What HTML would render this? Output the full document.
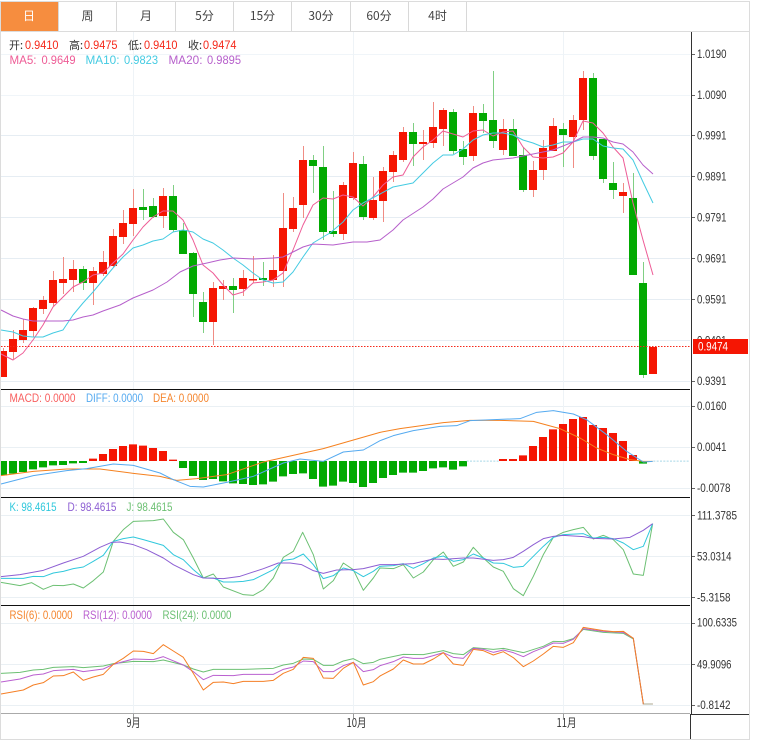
<!DOCTYPE html>
<html><head><meta charset="utf-8"><style>
html,body{margin:0;padding:0;background:#fff;width:758px;height:743px;overflow:hidden}
svg{display:block}
text{font-family:"Liberation Sans","Noto Sans CJK SC",sans-serif;font-size:12px}
.a{font-size:12px;fill:#333}
.t{font-size:12px;fill:#444;text-anchor:middle;font-family:"Noto Sans CJK SC","Liberation Sans",sans-serif}
.c{font-family:"Noto Sans CJK SC","Liberation Sans",sans-serif;fill:#333}
.r{fill:#f5281a}
polyline{fill:none;stroke-linejoin:round}
</style></head><body>
<svg width="758" height="743" viewBox="0 0 758 743" xmlns="http://www.w3.org/2000/svg">
<rect x="1" y="2" width="57" height="29" fill="#f68d3f"/>
<path d="M58.5 2V31M116.5 2V31M175.5 2V31M233.5 2V31M291.5 2V31M350.5 2V31M408.5 2V31M466.5 2V31" stroke="#d8d8d8"/>
<text class="t" x="29" y="20" style="fill:#fff">日</text>
<text class="t" x="87.500" y="20">周</text>
<text class="t" x="146" y="20">月</text>
<text class="t" x="204.500" y="20">5分</text>
<text class="t" x="262.500" y="20">15分</text>
<text class="t" x="321" y="20">30分</text>
<text class="t" x="379" y="20">60分</text>
<text class="t" x="437.500" y="20">4时</text>

<!-- grids -->
<path d="M1 54.500H690M1 95.500H690" stroke="#f0f5f9"/>
<path d="M1 135.500H690M1 176.500H690M1 217.500H690M1 258.500H690M1 299.500H690M1 340.500H690M1 381.500H690" stroke="#e6edf3"/>
<path d="M1 406.500H690M1 447.500H690M1 488.500H690M1 515.500H690M1 556.500H690M1 597.500H690M1 623.500H690M1 664.500H690M1 705.500H690" stroke="#eaf0f4"/>
<path d="M133.500 32V714M353.500 32V714M563.500 32V714" stroke="#eef3f7"/>

<!-- candles -->
<path fill="none" stroke="#f08c84" d="M3.500 348V351M13.500 330V359M23.500 319V343M33.500 307V337M43.500 296V314M53.500 271V306M63.500 257V294M73.500 260V292M93.500 267V305M103.500 251V276M113.500 229V268M123.500 210V244M133.500 189V236M163.500 188V228M213.500 282V345M223.500 280V300M243.500 270V296M253.500 256V283M273.500 255V287M283.500 193V287M293.500 197V232M303.500 146V218M343.500 182V240M353.500 152V200M373.500 177V220M383.500 167V222M393.500 151V182M403.500 127V162M423.500 130V160M433.500 102V148M443.500 108V146M473.500 106V161M503.500 119V155M533.500 161V197M543.500 140V180M553.500 118V151M573.500 115V168M583.500 71V130M623.500 183V213"/>
<path fill="none" stroke="#80cf84" d="M83.500 266V290M143.500 189V220M153.500 198V218M173.500 185V232M183.500 223V254M193.500 252V317M203.500 292V333M233.500 278V313M263.500 262V286M313.500 155V193M323.500 146V240M333.500 191V237M363.500 156V220M413.500 123V166M453.500 109V154M463.500 141V165M483.500 104V133M493.500 71V148M513.500 119V156M523.500 147V192M563.500 123V167M593.500 73V160M603.500 139V183M613.500 162V199M633.500 173V275M643.500 262V378"/>
<path fill="none" stroke="#f51603" stroke-width="8" d="M3 351V377M13 339V352M23 330V340M33 308V331M43 300V309M53 280V303M63 279V283M73 269V280M93 271V283M103 262V274M113 236V266M123 223V237M133 208V224M163 196V216M213 288V322M223 286V289M243 278V289M253 279V280.500M273 270V280M283 228V271M293 208V229M303 160V205M343 185V234M353 163V198M373 200V218M383 171V201M393 155V172M403 132V160M423 142V144M433 127V143M443 110V129M473 113V156M503 129V150M533 170V190M543 148V170M553 126V151M573 120V137M583 78V120M623 192V196M653 347V374"/>
<path fill="none" stroke="#02aa02" stroke-width="8" d="M83 269V283M143 207V210M153 206V217M173 196V230M183 230V254M193 253V294M203 302V322M233 286V290M263 278V280M313 160V166M323 167V232M333 231V234M363 164V217M413 132V144M453 112V151M463 149V157M483 113V121M493 120V141M513 129V156M523 155V190M563 129V135M593 78V156M603 139V179M613 183V190M633 198V275M643 283V375"/>

<!-- MA lines -->
<polyline stroke="#ee5c96" points="1,354 13,360 23,353 33,340 43,325 53,307 63,297 73,287 83,282 93,275 103,273 113,263 123,254 133,240 143,227 153,217 163,211 173,211 183,220 193,240 203,265 213,273 223,285 233,295 243,292 253,283 263,282 273,280 283,273 293,250 303,225 313,205 323,198 333,199 343,195 353,197 363,206 373,197 383,185 393,177 403,175 413,157 423,147 433,140 443,131 453,134 463,137 473,131 483,130 493,136 503,132 513,131 523,147 533,157 543,158 553,157 563,153 573,142 583,121 593,123 603,133 613,147 623,158 633,203 643,240 653,275"/>
<polyline stroke="#44cbe2" points="1,330 13,332 23,336 33,337 43,337 53,333 63,330 73,315 83,303 93,292 103,280 113,268 123,257 133,248 143,245 153,241 163,239 173,232 183,230 193,232 203,239 213,243 223,250 233,258 243,265 253,273 263,280 273,283 283,282 293,272 303,257 313,243 323,237 330,233 343,222 353,210 363,203 380,194 393,187 403,185 413,183 423,173 433,163 443,155 453,155 463,149 473,140 483,135 493,133 503,133 513,135 523,140 533,143 543,147 553,145 563,142 573,142 583,139 593,139 603,146 613,148 623,149 633,160 643,182 653,203"/>
<polyline stroke="#b65fcb" points="1,310 13,316 23,319 33,321 43,321 53,321 63,321 73,320 83,317 93,315 103,311 120,305 133,298 153,290 167,282 180,272 193,266 207,263 220,260 233,258 253,259 273,258 283,257 293,252 303,247 313,244 333,245 353,242 367,242 380,240 393,230 403,220 423,207 433,199 443,189 463,177 473,168 483,163 493,160 513,158 533,154 553,150 563,146 573,142 583,137 593,137 603,138 613,142 623,144 633,152 643,165 653,174"/>

<path d="M1 346.500H690" stroke="#f5281a" stroke-dasharray="1.500 1.500"/>

<!-- MACD -->
<g transform="translate(0,388) scale(.33333)">
<path fill="none" stroke="#02aa02" stroke-width="24" d="M9 219V262M39 219V257M69 219V252M99 219V244M129 219V238M159 219V232M189 219V231M219 219V226M249 219V225M549 219V240M579 219V264M609 219V276M639 219V273M669 219V280M699 219V286M729 219V288M759 219V291M789 219V289M819 219V281M849 219V265M879 219V258M909 219V256M939 219V273M969 219V296M999 219V293M1029 219V281M1059 219V285M1089 219V297M1119 219V285M1149 219V270M1179 219V261M1209 219V254M1239 219V254M1269 219V249M1299 219V241M1329 219V238M1359 219V245M1389 219V235M1929 219V227"/>
<path fill="none" stroke="#f51603" stroke-width="24" d="M279 219V212M309 219V198M339 219V183M369 219V174M399 219V169M429 219V173M459 219V180M489 219V189M519 219V215M1509 219V213M1539 219V213M1569 219V202M1599 219V174M1629 219V147M1659 219V124M1689 219V108M1719 219V93M1749 219V87M1779 219V111M1809 219V120M1839 219V135M1869 219V159M1899 219V201"/>
<path fill="none" stroke="#a8d8e8" stroke-width="3" stroke-dasharray="6 4" d="M1400 219.500H1500M1960 219.500H2070"/>
<polyline stroke="#f5811f" stroke-width="3" points="3,263 100,250 200,243 300,243 400,256 480,265 530,277 590,272 680,260 790,222 970,182 1140,133 1200,122 1270,112 1330,104 1410,97 1500,97 1600,100 1680,122 1740,150 1790,180 1840,200 1890,215 1930,220 1958,220"/>
<polyline stroke="#55aaf0" stroke-width="3" points="3,288 100,263 200,248 260,242 340,228 400,232 480,255 520,275 570,295 610,297 680,283 760,265 850,225 900,213 970,220 1030,192 1090,186 1140,158 1180,143 1240,128 1320,115 1370,113 1410,98 1500,94 1560,92 1610,73 1660,68 1720,78 1760,95 1820,140 1880,190 1930,222 1958,220"/>
</g>

<!-- KDJ -->
<g transform="translate(0,498) scale(.33333)" stroke-width="3">
<polyline stroke="#6cc073" points="3,253 60,263 95,254 130,274 160,262 190,263 220,258 250,270 280,248 310,222 340,130 370,95 400,70 460,68 490,63 520,103 550,125 580,180 610,240 640,228 670,267 730,290 760,292 790,275 820,240 850,178 880,160 908,103 940,170 970,273 1000,248 1030,195 1060,215 1090,277 1120,240 1140,210 1180,212 1210,200 1240,240 1270,222 1300,185 1330,162 1360,205 1390,192 1420,148 1450,180 1480,207 1510,220 1540,272 1570,293 1600,235 1630,170 1660,118 1690,103 1720,95 1750,88 1780,123 1810,112 1840,125 1870,155 1900,228 1930,232 1958,77"/>
<polyline stroke="#30c8dc" points="3,241 70,241 100,235 130,236 160,225 190,220 220,212 250,207 280,190 310,172 340,130 370,122 400,117 430,125 490,142 520,170 550,185 580,215 610,240 640,240 670,252 700,252 730,250 760,245 790,230 820,215 850,187 880,183 910,168 940,200 970,242 1000,233 1030,210 1060,218 1090,236 1120,220 1140,205 1180,203 1210,197 1240,211 1270,197 1300,180 1330,174 1360,190 1390,185 1420,168 1450,180 1480,195 1510,196 1540,208 1570,205 1600,175 1630,145 1660,118 1690,110 1750,107 1780,120 1810,118 1840,122 1870,135 1900,155 1930,145 1958,77"/>
<polyline stroke="#8d5fd3" points="3,236 60,230 130,217 190,195 250,175 300,148 335,133 360,132 400,140 440,155 490,180 520,200 550,215 580,230 610,240 670,242 720,235 790,212 835,195 870,195 905,200 940,218 970,226 1010,216 1060,215 1090,212 1140,200 1180,200 1240,197 1300,183 1330,184 1390,180 1420,180 1480,187 1510,185 1540,178 1570,160 1600,140 1630,122 1660,115 1690,112 1750,116 1780,121 1840,123 1890,118 1930,97 1958,77"/>
</g>

<!-- RSI -->
<g transform="translate(0,605) scale(.33333)" stroke-width="3">
<polyline stroke="#6cc073" points="3,205 60,202 100,195 130,193 160,187 220,185 250,188 310,183 340,176 400,169 460,170 490,165 550,180 580,192 610,201 640,193 730,193 820,190 850,180 880,175 910,162 940,163 970,181 1000,181 1030,168 1060,161 1090,176 1120,172 1140,163 1210,148 1270,149 1330,137 1360,146 1390,149 1420,128 1480,133 1510,130 1570,143 1630,124 1660,109 1690,110 1720,101 1750,73 1810,82 1870,85 1900,102 1930,297 1958,297"/>
<polyline stroke="#ba60d0" points="3,231 60,222 100,210 130,207 160,197 220,193 250,200 310,192 340,178 370,170 400,162 460,164 490,155 550,180 580,200 610,224 640,211 700,212 730,208 820,208 850,193 880,186 910,168 940,170 970,200 1000,200 1030,182 1060,172 1090,200 1120,194 1140,182 1180,170 1210,156 1240,160 1270,160 1300,152 1330,143 1360,157 1390,160 1420,130 1450,133 1480,142 1510,135 1540,143 1570,155 1600,140 1630,128 1660,114 1690,115 1720,103 1750,71 1810,79 1870,82 1900,100 1930,297 1958,297"/>
<polyline stroke="#f57f25" points="3,267 70,255 100,240 130,233 160,213 190,212 220,201 250,226 280,216 310,208 340,178 370,160 400,138 430,139 460,146 490,119 520,138 550,157 580,205 610,255 640,232 670,231 700,236 730,229 790,229 820,226 850,205 880,193 910,157 940,160 970,219 1000,220 1030,190 1060,172 1090,240 1120,230 1140,213 1180,192 1210,165 1240,177 1270,177 1300,162 1330,143 1360,177 1390,181 1420,133 1450,137 1480,150 1510,140 1540,158 1570,185 1600,168 1630,147 1660,124 1690,127 1720,113 1750,67 1780,72 1810,77 1840,80 1870,79 1900,100 1930,297 1958,297"/>
<path d="M1930 297H1958" stroke="#a8a890" stroke-width="3"/>
</g>

<!-- separators / axes -->
<path d="M1 389.500H690M1 497.500H690M1 605.500H690" stroke="#111"/>
<path d="M1 713.500H690" stroke="#aaa"/>
<path d="M691.500 32V714" stroke="#333"/>
<path d="M691 714.500H749M690.500 714V739" stroke="#333"/>
<path d="M133.500 714V718M353.500 714V718M563.500 714V718" stroke="#999"/>
<path d="M692 54.500h3M692 95.500h3M692 135.500h3M692 176.500h3M692 217.500h3M692 258.500h3M692 299.500h3M692 381.500h3M692 406.500h3M692 447.500h3M692 488.500h3M692 515.500h3M692 556.500h3M692 597.500h3M692 623.500h3M692 664.500h3M692 705.500h3" stroke="#666"/>

<g class="axis">
<text class="a" x="697" y="58" textLength="29.500" lengthAdjust="spacingAndGlyphs">1.0190</text>
<text class="a" x="697" y="99" textLength="29.500" lengthAdjust="spacingAndGlyphs">1.0090</text>
<text class="a" x="697" y="139.500" textLength="29.500" lengthAdjust="spacingAndGlyphs">0.9991</text>
<text class="a" x="697" y="180.500" textLength="29.500" lengthAdjust="spacingAndGlyphs">0.9891</text>
<text class="a" x="697" y="221.500" textLength="29.500" lengthAdjust="spacingAndGlyphs">0.9791</text>
<text class="a" x="697" y="262.500" textLength="29.500" lengthAdjust="spacingAndGlyphs">0.9691</text>
<text class="a" x="697" y="303.500" textLength="29.500" lengthAdjust="spacingAndGlyphs">0.9591</text>
<text class="a" x="697" y="344.500" textLength="29.500" lengthAdjust="spacingAndGlyphs">0.9491</text>
<text class="a" x="697" y="385" textLength="29.500" lengthAdjust="spacingAndGlyphs">0.9391</text>
<rect x="693" y="339" width="55" height="15" fill="#f51603"/>
<text class="a" x="698" y="350.500" textLength="30" lengthAdjust="spacingAndGlyphs" style="fill:#fff">0.9474</text>
<text class="a" x="697" y="410" textLength="29.500" lengthAdjust="spacingAndGlyphs">0.0160</text>
<text class="a" x="697" y="451" textLength="29.500" lengthAdjust="spacingAndGlyphs">0.0041</text>
<text class="a" x="697" y="492" textLength="33.500" lengthAdjust="spacingAndGlyphs">-0.0078</text>
<text class="a" x="697" y="519.500" textLength="40" lengthAdjust="spacingAndGlyphs">111.3785</text>
<text class="a" x="697" y="560.500" textLength="34.500" lengthAdjust="spacingAndGlyphs">53.0314</text>
<text class="a" x="697" y="601.500" textLength="33.500" lengthAdjust="spacingAndGlyphs">-5.3158</text>
<text class="a" x="697" y="626.500" textLength="40" lengthAdjust="spacingAndGlyphs">100.6335</text>
<text class="a" x="697" y="668.500" textLength="34.500" lengthAdjust="spacingAndGlyphs">49.9096</text>
<text class="a" x="697" y="709" textLength="33.500" lengthAdjust="spacingAndGlyphs">-0.8142</text>
</g>

<text class="c" x="126.500" y="727" textLength="14" lengthAdjust="spacingAndGlyphs">9月</text>
<text class="c" x="346.500" y="727" textLength="20" lengthAdjust="spacingAndGlyphs">10月</text>
<text class="c" x="556.500" y="727" textLength="20" lengthAdjust="spacingAndGlyphs">11月</text>

<!-- legends -->
<text class="c" x="9" y="49" style="font-size:11px">开:</text><text class="r" x="25" y="49" textLength="33.500" lengthAdjust="spacingAndGlyphs">0.9410</text>
<text class="c" x="69" y="49" style="font-size:11px">高:</text><text class="r" x="84" y="49" textLength="33.500" lengthAdjust="spacingAndGlyphs">0.9475</text>
<text class="c" x="128" y="49" style="font-size:11px">低:</text><text class="r" x="144" y="49" textLength="33.500" lengthAdjust="spacingAndGlyphs">0.9410</text>
<text class="c" x="188" y="49" style="font-size:11px">收:</text><text class="r" x="203" y="49" textLength="33.500" lengthAdjust="spacingAndGlyphs">0.9474</text>

<g fill="#ee5c96"><text x="9.500" y="64" textLength="27" lengthAdjust="spacingAndGlyphs">MA5:</text><text x="41.500" y="64" textLength="34" lengthAdjust="spacingAndGlyphs">0.9649</text></g>
<g fill="#44cbe2"><text x="85.500" y="64" textLength="34" lengthAdjust="spacingAndGlyphs">MA10:</text><text x="124" y="64" textLength="34" lengthAdjust="spacingAndGlyphs">0.9823</text></g>
<g fill="#b65fcb"><text x="168.500" y="64" textLength="34" lengthAdjust="spacingAndGlyphs">MA20:</text><text x="207" y="64" textLength="34" lengthAdjust="spacingAndGlyphs">0.9895</text></g>

<text x="9.500" y="402" fill="#f86060" textLength="66" lengthAdjust="spacingAndGlyphs">MACD: 0.0000</text>
<text x="86" y="402" fill="#55aaf0" textLength="57" lengthAdjust="spacingAndGlyphs">DIFF: 0.0000</text>
<text x="153" y="402" fill="#f5862f" textLength="56" lengthAdjust="spacingAndGlyphs">DEA: 0.0000</text>

<text x="9.500" y="511" fill="#30c8dc" textLength="47" lengthAdjust="spacingAndGlyphs">K: 98.4615</text>
<text x="67.500" y="511" fill="#8d5fd3" textLength="49" lengthAdjust="spacingAndGlyphs">D: 98.4615</text>
<text x="126.500" y="511" fill="#6cc073" textLength="46" lengthAdjust="spacingAndGlyphs">J: 98.4615</text>

<text x="9.500" y="619" fill="#f5862f" textLength="63" lengthAdjust="spacingAndGlyphs">RSI(6): 0.0000</text>
<text x="83" y="619" fill="#ba60d0" textLength="69" lengthAdjust="spacingAndGlyphs">RSI(12): 0.0000</text>
<text x="162.500" y="619" fill="#6cc073" textLength="69" lengthAdjust="spacingAndGlyphs">RSI(24): 0.0000</text>

<!-- outer border -->
<path d="M.500 1.500H749.500V739.500H.500Z" fill="none" stroke="#dcdcdc"/>
<path d="M1 31.500H749" stroke="#dcdcdc"/>
</svg>
</body></html>
